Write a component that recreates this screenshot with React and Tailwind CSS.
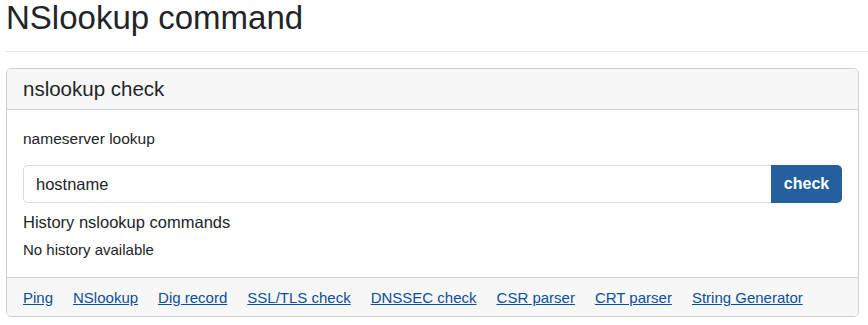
import React, { useState } from 'react'

const links = ['Ping', 'NSlookup', 'Dig record', 'SSL/TLS check', 'DNSSEC check', 'CSR parser', 'CRT parser', 'String Generator']

export default function App() {
  const [host, setHost] = useState('')

  return (
    <div className="bg-white text-[#212529] pl-[6px] pr-0" style={{ fontFamily: '"Liberation Sans", Arial, sans-serif' }}>
      <h1 className="text-[33px] leading-[36px] pt-0 pb-[15px] border-b border-[#e3e3e3]">NSlookup command</h1>

      <div className="mt-[16px] mr-[9px] border border-[#d0d0d0] rounded-[5px] overflow-hidden">
        <div className="bg-[#f7f7f7] border-b border-[#d0d0d0] h-[41px] px-[16px] flex items-center text-[20.5px]">
          nslookup check
        </div>

        <div className="px-[16px] pt-[19px] pb-[17px]">
          <div className="text-[15.5px] leading-[20px]">nameserver lookup</div>
          <div className="flex mt-[16px]">
            <input
              value={host}
              onChange={e => setHost(e.target.value)}
              placeholder="hostname"
              className="flex-1 h-[38px] border border-[#dcdcdc] border-r-0 rounded-l-[5px] px-[12px] text-[16.5px] placeholder-[#212529] outline-none"
            />
            <button className="w-[71px] h-[38px] bg-[#245f9e] text-white text-[16px] font-bold rounded-r-[5px]">check</button>
          </div>
          <div className="text-[16.5px] leading-[22px] mt-[8px]">History nslookup commands</div>
          <div className="text-[15px] leading-[20px] mt-[7px]">No history available</div>
        </div>

        <div className="bg-[#f7f7f7] border-t border-[#d0d0d0] h-[39px] pt-[2px] px-[16px] flex items-center gap-[20px] text-[15px]">
          {links.map(l => (
            <a key={l} href="#" className="text-[#0b4f9c] underline">{l}</a>
          ))}
        </div>
      </div>
    </div>
  )
}
